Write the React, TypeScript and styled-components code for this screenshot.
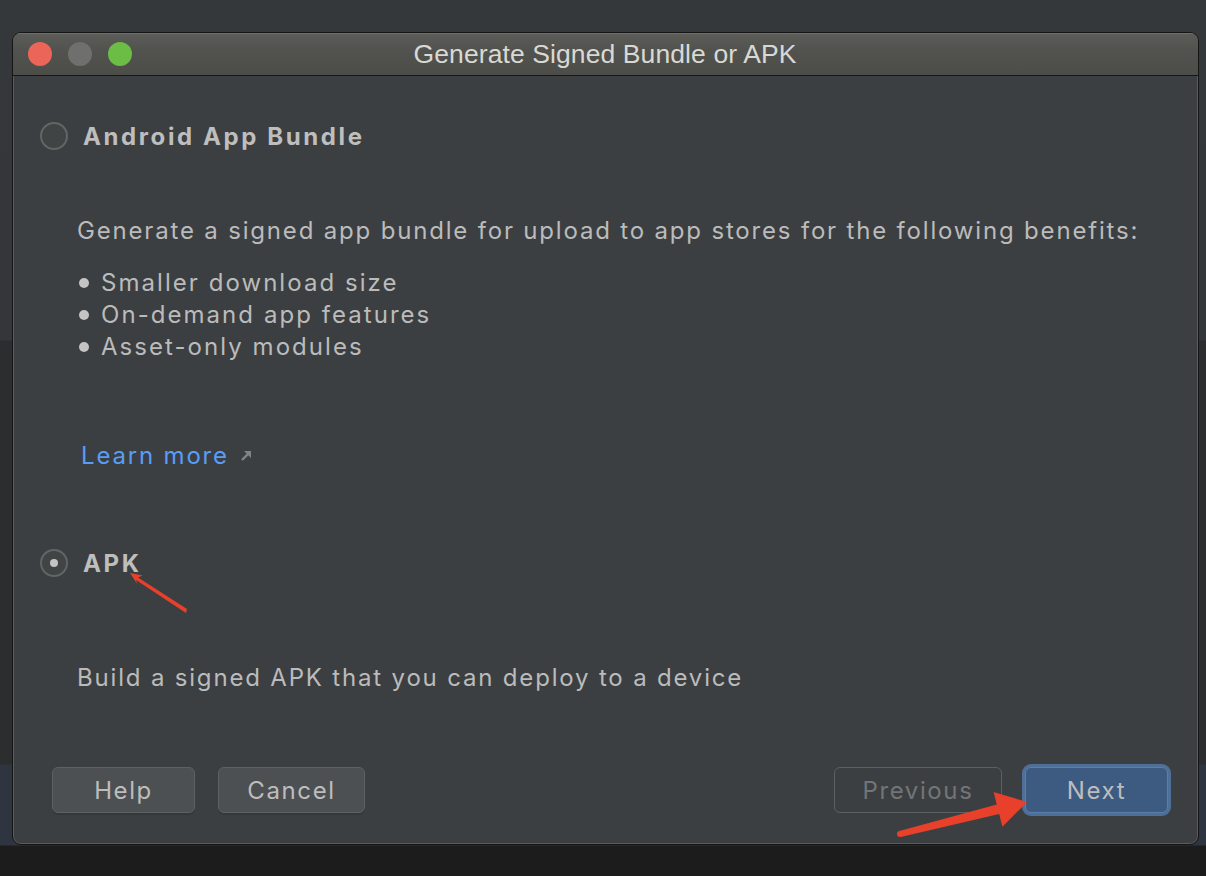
import React from 'react';
import styled, { createGlobalStyle } from 'styled-components';

const GlobalStyle = createGlobalStyle`
  html, body {
    margin: 0;
    padding: 0;
  }
  body {
    width: 1206px;
    height: 876px;
    overflow: hidden;
    font-family: Inter, "Open Sans", "Liberation Sans", sans-serif;
    background: linear-gradient(
      180deg,
      #35383a 0px,
      #34373a 340px,
      #2b2d2f 341px,
      #2b2d2f 764px,
      #2e3540 765px,
      #2e3540 845px,
      #1c1c1c 846px
    );
  }
`;

const Page = styled.div`
  position: relative;
  width: 1206px;
  height: 876px;
  padding-top: 32px;
  padding-left: 12px;
  box-sizing: border-box;
`;

const Window = styled.div`
  width: 1187px;
  height: 813px;
  box-sizing: border-box;
  display: flex;
  flex-direction: column;
  background: #3c3f41;
  border: 1px solid #151515;
  border-radius: 9px;
  overflow: hidden;
  box-shadow: inset 1px 0 0 #5a5c5e, inset -1px 0 0 #5a5c5e, inset 0 -1px 0 #5a5c5e;
`;

const TitleBar = styled.div`
  position: relative;
  height: 42px;
  flex-shrink: 0;
  display: flex;
  align-items: center;
  justify-content: center;
  background: linear-gradient(180deg, #5c5d58 0%, #52534e 40%, #4c4d49 100%);
  border-bottom: 1px solid #161616;
  box-shadow: inset 0 1px 0 #6f706b;
`;

const Lights = styled.div`
  position: absolute;
  left: 15px;
  top: 9px;
  display: flex;
  gap: 16px;
`;

const Light = styled.span<{ $color: string }>`
  width: 24px;
  height: 24px;
  border-radius: 50%;
  background: ${p => p.$color};
`;

const Title = styled.div`
  font-family: "Liberation Sans", Arial, sans-serif;
  font-size: 26.5px;
  color: #d9d9d4;
  letter-spacing: 0.1px;
  margin-right: 1px;
`;

const Body = styled.div`
  flex: 1;
  display: flex;
  flex-direction: column;
  padding: 44px 27px 31px 27px;
  color: #bbbbbb;
  font-size: 24px;
  letter-spacing: 1.82px;
`;

const OptionRow = styled.div`
  display: flex;
  align-items: center;
  height: 32px;
  gap: 15px;
`;

const Radio = styled.span<{ $checked?: boolean }>`
  width: 28px;
  height: 28px;
  box-sizing: border-box;
  border-radius: 50%;
  border: 2px solid #626566;
  background: #404444;
  display: flex;
  align-items: center;
  justify-content: center;

  &::after {
    content: '';
    display: ${p => (p.$checked ? 'block' : 'none')};
    width: 8px;
    height: 8px;
    border-radius: 50%;
    background: #c4c4c4;
  }
`;

const OptionLabel = styled.span`
  font-weight: 700;
  font-size: 24px;
  letter-spacing: 2.6px;
  color: #bebebe;
`;

const Description = styled.div<{ $top: number }>`
  margin-top: ${p => p.$top}px;
  padding-left: 37px;
  line-height: 32px;
`;

const OptionBlock = styled.div<{ $top: number }>`
  margin-top: ${p => p.$top}px;
`;

const Bullets = styled.ul`
  list-style: none;
  margin: 20px 0 0 0;
  padding: 0 0 0 39px;
  line-height: 32px;
  letter-spacing: 2.05px;
`;

const Bullet = styled.li`
  display: flex;
  align-items: center;
  gap: 12px;

  &::before {
    content: '';
    width: 10px;
    height: 10px;
    border-radius: 50%;
    background: #c4c4c4;
  }
`;

const LearnMore = styled.a`
  margin-top: 77px;
  padding-left: 41px;
  line-height: 32px;
  color: #589df6;
  text-decoration: none;
  display: flex;
  align-items: center;
  gap: 10px;
`;

const ExternalIcon = styled.svg`
  width: 14px;
  height: 14px;
`;

const Spacer = styled.div`
  flex: 1;
`;

const ButtonRow = styled.div`
  display: flex;
  align-items: center;
  padding: 0 0 0 12px;
`;

const Button = styled.button<{ $variant?: 'default' | 'primary' | 'disabled'; $width: number }>`
  width: ${p => p.$width}px;
  height: 46px;
  box-sizing: border-box;
  border-radius: 6px;
  font-family: Inter, "Open Sans", "Liberation Sans", sans-serif;
  font-size: 24px;
  letter-spacing: 1.6px;
  cursor: default;
  border: 1px solid
    ${p => (p.$variant === 'primary' ? '#5b7fab' : p.$variant === 'disabled' ? '#5d6062' : '#5e6162')};
  background: ${p => (p.$variant === 'primary' ? '#3d5a80' : p.$variant === 'disabled' ? 'transparent' : '#4c5052')};
  color: ${p => (p.$variant === 'disabled' ? '#727577' : '#bdbdbd')};
  box-shadow: ${p =>
    p.$variant === 'primary'
      ? '0 0 0 3px #4e6f98'
      : p.$variant === 'disabled'
      ? 'none'
      : '0 2px 0 #35383a'};
`;

const Gap = styled.div<{ $w: number }>`
  width: ${p => p.$w}px;
  flex-shrink: 0;
`;

const Annotations = styled.svg`
  position: absolute;
  left: 0;
  top: 0;
  width: 1206px;
  height: 876px;
  pointer-events: none;
`;

export default function App() {
  return (
    <>
      <GlobalStyle />
      <Page>
        <Window>
          <TitleBar>
            <Lights>
              <Light $color="#ec6559" />
              <Light $color="#6f6f6d" />
              <Light $color="#6cbd45" />
            </Lights>
            <Title>Generate Signed Bundle or APK</Title>
          </TitleBar>
          <Body>
            <OptionRow>
              <Radio />
              <OptionLabel>Android App Bundle</OptionLabel>
            </OptionRow>
            <Description $top={63}>
              Generate a signed app bundle for upload to app stores for the following benefits:
            </Description>
            <Bullets>
              <Bullet>Smaller download size</Bullet>
              <Bullet>On-demand app features</Bullet>
              <Bullet>Asset-only modules</Bullet>
            </Bullets>
            <LearnMore href="#">
              Learn more
              <ExternalIcon viewBox="0 0 14 14">
                <path d="M3 11 L10.5 3.5" stroke="#7f8487" strokeWidth="2.4" fill="none" />
                <path d="M5 2 H12 V9 Z" fill="#7f8487" />
              </ExternalIcon>
            </LearnMore>
            <OptionBlock $top={75}>
              <OptionRow>
                <Radio $checked />
                <OptionLabel>APK</OptionLabel>
              </OptionRow>
            </OptionBlock>
            <Description $top={83}>Build a signed APK that you can deploy to a device</Description>
            <Spacer />
            <ButtonRow>
              <Button $width={143}>Help</Button>
              <Gap $w={23} />
              <Button $width={147}>Cancel</Button>
              <Spacer />
              <Button $variant="disabled" $width={168}>Previous</Button>
              <Gap $w={23} />
              <Button $variant="primary" $width={143}>Next</Button>
              <Gap $w={3} />
            </ButtonRow>
          </Body>
        </Window>
        <Annotations viewBox="0 0 1206 876">
          <polygon
            points="186,613 187,609 138,577.5 142.8,575.5 130,573 137.2,583.9 136,580"
            fill="#e8402a"
          />
          <circle cx="900" cy="834" r="3" fill="#e8402a" />
          <polygon
            points="899.3,831.1 996.8,804.5 993.6,791.9 1027,802 1002.4,826.7 999.2,814.1 900.7,836.9"
            fill="#e8402a"
          />
        </Annotations>
      </Page>
    </>
  );
}
